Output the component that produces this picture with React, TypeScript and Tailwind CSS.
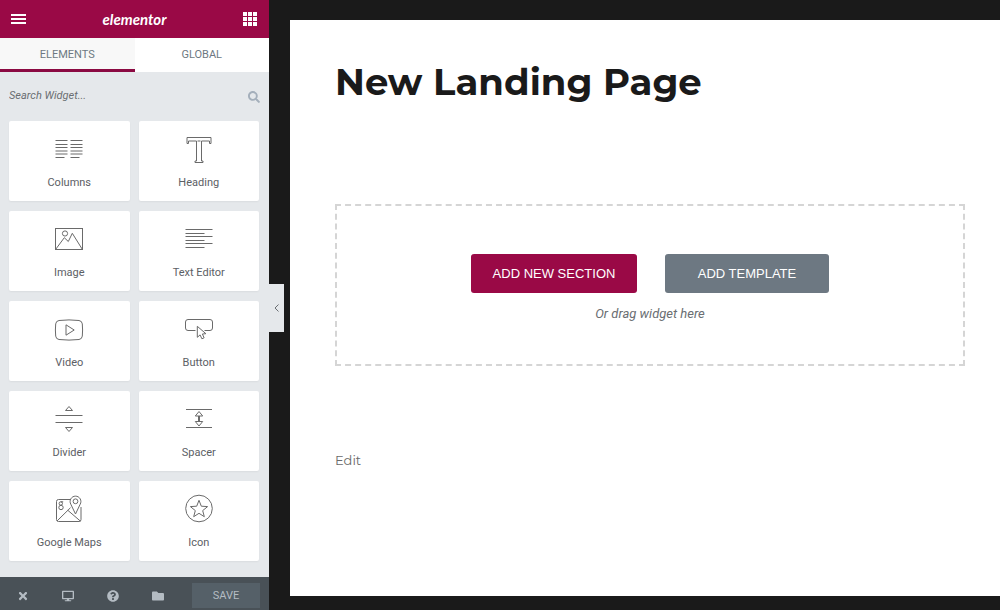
import type { ReactNode } from 'react';
import { FaDesktop, FaFolder, FaQuestionCircle, FaSearch, FaTimes } from 'react-icons/fa';

interface Widget {
  name: string;
  icon: ReactNode;
}

const widgets: Widget[] = [
  {
    name: 'Columns',
    icon: (
      <path d="M.5 5.5h12M.5 9.5h12M.5 12.5h12M.5 16h12M.5 19h12M.5 22.5h9M15.5 5.5h12M15.5 9.5h12M15.5 12.5h12M15.5 16h12M15.5 19h12M15.5 22.5h9" />
    ),
  },
  {
    name: 'Heading',
    icon: <path d="M2 2.5h24v6h-1.5v-2.5h-8v20h1.5v1.5h-8v-1.5h1.5v-20h-8v2.5h-1.5zM12.5 6h3" />,
  },
  {
    name: 'Image',
    icon: (
      <>
        <rect x="0.5" y="3.5" width="27" height="21" />
        <circle cx="10" cy="8.5" r="2.6" />
        <path d="M.7 24.3 9.3 12.7l4 3.8 4-8.2 10 16" />
      </>
    ),
  },
  {
    name: 'Text Editor',
    icon: <path d="M.5 4.5h27M.5 8.5h19M.5 11.5h27M.5 15.5h19M.5 18.5h27M.5 22.5h19" />,
  },
  {
    name: 'Video',
    icon: (
      <>
        <path d="M4 5.5q10-1.2 20 0 3 .4 3.3 3.4.6 6.1 0 12.2-.3 3-3.3 3.4-10 1.2-20 0-3-.4-3.3-3.4-.6-6.1 0-12.2Q1 5.9 4 5.5z" />
        <path d="M11 9.8v10.4l8.2-5.2z" />
      </>
    ),
  },
  {
    name: 'Button',
    icon: (
      <>
        <path d="M10.5 15.500H3q-2.500 0-2.500-2.500V7q0-2.500 2.500-2.500h22q2.500 0 2.500 2.500v6q0 2.500-2.500 2.500h-5.500" />
        <path d="M12.300 11.300v11l2.800-2.400 1.800 3.900 2.200-1-1.700-3.800 3.500-.3z" />
      </>
    ),
  },
  {
    name: 'Divider',
    icon: <path d="M.5 10.5h27M.5 17.5h27M14 1.5l3.5 4h-7zM14 26.5l3.5-4h-7z" />,
  },
  {
    name: 'Spacer',
    icon: <path d="M1 4.5h26M1 22.5h26M14 6.5l3.7 4.5h-7.4zM14 21l3.7-4.5h-7.4zM13.5 11v5.5M14.5 11v5.5" />,
  },
  {
    name: 'Google Maps',
    icon: (
      <>
        <path d="M15.5 4.5H3.5q-2 0-2 2v18q0 2 2 2h20.500q2 0 2-2V12" />
        <path d="M2 26l13.5-13.3M12.8 15.3l12.700 10.900" />
        <path d="M20.5 19l-4.700-9.800a5.400 5.400 0 1 1 9.400 0z" />
        <circle cx="20.5" cy="6.3" r="2.4" />
        <circle cx="5.8" cy="8.5" r="1.7" />
        <circle cx="6" cy="12.5" r="2.2" />
        <path d="M5.8 6.8h2.4" />
      </>
    ),
  },
  {
    name: 'Icon',
    icon: (
      <>
        <circle cx="14" cy="13.5" r="13.3" />
        <path d="M14 5.3l2.3 5.9 6.3.4-4.9 4 1.600 6.100-5.300-3.400-5.300 3.400 1.600-6.100-4.900-4 6.300-.4z" />
      </>
    ),
  },
];

function WidgetCard({ name, icon }: Widget) {
  return (
    <button
      type="button"
      className="flex h-20 flex-col items-center gap-3 rounded-xs bg-white pt-[14px] text-[11px] leading-4 text-[#5c6065] shadow-xs"
    >
      <svg className="h-7 w-7 shrink-0 overflow-visible" viewBox="0 0 28 28" fill="none" stroke="#6a6a6a" aria-hidden="true">
        {icon}
      </svg>
      <span>{name}</span>
    </button>
  );
}

function Sidebar() {
  return (
    <aside className="relative flex w-[269px] shrink-0 flex-col bg-[#e5e8eb]">
      <header className="flex h-[38px] items-center justify-between bg-[#9a0946] pr-3 pl-[11px] text-white">
        <button type="button" aria-label="Menu" className="flex w-[15px] flex-col gap-[2px]">
          <span className="h-[2px] w-full bg-white" />
          <span className="h-[2px] w-full bg-white" />
          <span className="h-[2px] w-full bg-white" />
        </button>
        <span className="font-['Lato',sans-serif] text-[15px] leading-5 font-bold italic">elementor</span>
        <button type="button" aria-label="Widgets panel" className="grid grid-cols-3 gap-px">
          {Array.from({ length: 9 }, (_, i) => (
            <span key={i} className="h-1 w-1 bg-white" />
          ))}
        </button>
      </header>

      {/* Tabs */}
      <nav className="grid h-[34px] grid-cols-2 bg-white text-[11px] text-[#6d7882]">
        <button type="button" className="bg-[#f8f8f8] shadow-[inset_0_-3px_0_#8b0a42]">
          ELEMENTS
        </button>
        <button type="button">GLOBAL</button>
      </nav>

      {/* Search */}
      <div className="flex h-[49px] items-center justify-between px-[9px]">
        <input
          type="search"
          aria-label="Search Widget"
          placeholder="Search Widget..."
          className="min-w-0 flex-1 bg-transparent text-[11px] text-[#5c6065] italic outline-none placeholder:text-[#6a6e72]"
        />
        <FaSearch className="h-3 w-3 text-[#a4afbb]" />
      </div>

      <div className="grid grid-cols-2 gap-x-[9px] gap-y-[10px] pr-[10px] pl-[9px]">
        {widgets.map((widget) => (
          <WidgetCard key={widget.name} {...widget} />
        ))}
      </div>

      <footer className="mt-auto flex h-[33px] items-center bg-[#495157] pt-1 pr-[9px] text-[#b4bcc3]">
        <button type="button" aria-label="Close" className="flex w-[45px] justify-center">
          <FaTimes className="h-3 w-3" />
        </button>
        <button type="button" aria-label="Responsive mode" className="flex w-[45px] justify-center">
          <FaDesktop className="h-3 w-3" />
        </button>
        <button type="button" aria-label="Help" className="flex w-[45px] justify-center">
          <FaQuestionCircle className="h-3 w-3" />
        </button>
        <button type="button" aria-label="Templates" className="flex w-[45px] justify-center">
          <FaFolder className="h-3 w-3" />
        </button>
        <button type="button" className="ml-auto h-[25px] w-[68px] bg-[#556068] pt-[2px] text-[11px]">
          SAVE
        </button>
      </footer>

      {/* Collapse handle */}
      <button
        type="button"
        aria-label="Collapse panel"
        className="absolute top-[284px] left-full flex h-12 w-[15px] items-center justify-center bg-[#e5e8eb]"
      >
        <svg className="h-2 w-[5px]" viewBox="0 0 5 8" fill="none" stroke="#6a6e72" aria-hidden="true">
          <path d="M4.5.5 1 4l3.5 3.5" />
        </svg>
      </button>
    </aside>
  );
}

export default function App() {
  return (
    <div className="flex min-h-screen bg-[#1a1a1a] font-['Roboto',sans-serif]">
      <Sidebar />
      <div className="flex min-w-0 flex-1 pt-5 pb-[14px] pl-[21px]">
        <main className="flex-1 bg-white pt-10 pr-[35px] pl-[45px]">
          <h1 className="font-['Montserrat','Inter',sans-serif] text-[37px] leading-11 font-bold text-[#1a1a1a]">
            New Landing Page
          </h1>

          <section className="mt-25 flex h-[162px] flex-col items-center border-2 border-dashed border-[#d5d5d5] pt-12">
            <div className="flex gap-7 font-['Liberation_Sans',sans-serif] text-[13px] text-white">
              <button type="button" className="h-[39px] w-[166px] rounded-[3px] bg-[#9a0946]">
                ADD NEW SECTION
              </button>
              <button type="button" className="h-[39px] w-[164px] rounded-[3px] bg-[#6d7882]">
                ADD TEMPLATE
              </button>
            </div>
            <p className="mt-[11px] text-[13px] leading-5 text-[#6a6e72] italic">Or drag widget here</p>
          </section>

          <a href="#edit" className="mt-[84px] inline-block font-['Montserrat','Open_Sans',sans-serif] text-[13px] leading-5 text-[#6a6a6a]">
            Edit
          </a>
        </main>
      </div>
    </div>
  );
}
